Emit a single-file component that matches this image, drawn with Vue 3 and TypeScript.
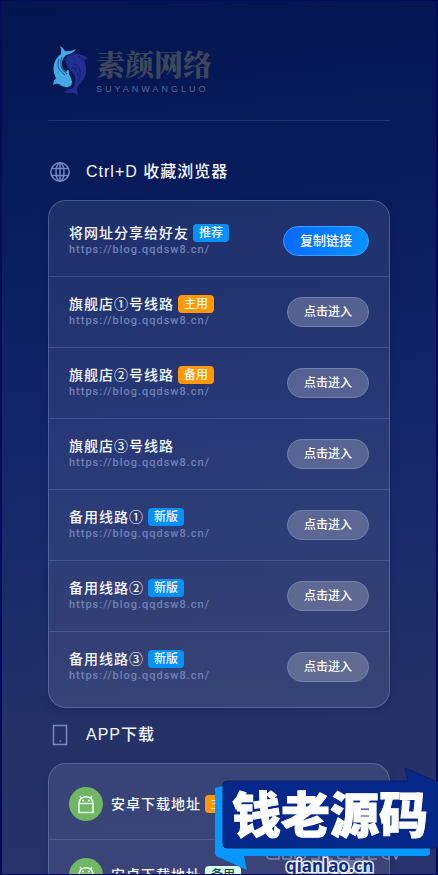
<script setup lang="ts">
interface Badge {
  text: string
  tone: 'blue' | 'orange' | 'mint'
}

interface Line {
  name: string
  badge?: Badge
  primary?: boolean
}

const url = 'https://blog.qqdsw8.cn/'

const lines: Line[] = [
  { name: '将网址分享给好友', badge: { text: '推荐', tone: 'blue' }, primary: true },
  { name: '旗舰店①号线路', badge: { text: '主用', tone: 'orange' } },
  { name: '旗舰店②号线路', badge: { text: '备用', tone: 'orange' } },
  { name: '旗舰店③号线路' },
  { name: '备用线路①', badge: { text: '新版', tone: 'blue' } },
  { name: '备用线路②', badge: { text: '新版', tone: 'blue' } },
  { name: '备用线路③', badge: { text: '新版', tone: 'blue' } },
]

const downloads: { name: string; badge: Badge }[] = [
  { name: '安卓下载地址', badge: { text: '主用', tone: 'orange' } },
  { name: '安卓下载地址', badge: { text: '备用', tone: 'mint' } },
]

function copyLink(): void {
  navigator.clipboard?.writeText(url)
}
</script>

<template>
  <div class="page">
    <header class="header">
      <svg class="logo" viewBox="0 0 40 52" aria-hidden="true">
        <path fill="#202f91" d="M14 16C16 9 25 7 30 10Q34 10 37 14L33 15C37 24 35 33 29 39Q25 42 26 45L27 51Q24 47 20 48Q16 49 13 47Q17 44 22 43C26 37 25 30 20 26Q16 22 14 16Z" />
        <path fill="none" stroke="#0b1d66" stroke-width="0.8" d="M23 19C30 21 31 30 27 37M28 11Q30 15 33 15M21 22Q27 25 27 31" />
        <path fill="#45a9e3" d="M9 1Q13 3 14 6Q19 7 25 4Q22 9 15 10C10 15 9 22 15 27Q18 22 18 28Q18 30 20 33Q23 41 17 42Q12 43 8 39Q5 38 2 40Q2 36 5 33C0 24 3 14 10 9Q11 5 9 1Z" />
        <path fill="none" stroke="#0b2d70" stroke-width="0.8" d="M8 14C5 22 9 26 14 30M11 12C8 20 11 25 16 29" />
      </svg>
      <div class="brand">
        <h1 class="brand-name">素颜网络</h1>
        <span class="brand-sub">SUYANWANGLUO</span>
      </div>
    </header>

    <main>
      <section>
        <h2 class="section-title">
          <svg class="section-icon" viewBox="0 0 24 24" aria-hidden="true">
            <circle cx="12" cy="12" r="9.2" />
            <ellipse cx="12" cy="12" rx="4" ry="9.2" />
            <path d="M4 8.500H20M4 15.500H20M12 3V21" />
          </svg>
          <span>Ctrl+D 收藏浏览器</span>
        </h2>
        <ul class="card">
          <li v-for="line in lines" :key="line.name" class="row">
            <div class="info">
              <div class="name-line">
                <span class="name">{{ line.name }}</span>
                <span v-if="line.badge" class="badge" :class="line.badge.tone">{{ line.badge.text }}</span>
              </div>
              <span class="url">{{ url }}</span>
            </div>
            <button v-if="line.primary" type="button" class="pill primary" @click="copyLink">复制链接</button>
            <a v-else class="pill" :href="url">点击进入</a>
          </li>
        </ul>
      </section>

      <section>
        <h2 class="section-title">
          <svg class="section-icon" viewBox="0 0 24 24" aria-hidden="true">
            <rect x="5.5" y="2.500" width="13" height="19" />
            <path d="M11.500 18H13" />
          </svg>
          <span>APP下载</span>
        </h2>
        <ul class="card">
          <li v-for="item in downloads" :key="item.badge.text" class="row">
            <div class="app">
              <svg class="android" viewBox="0 0 34 34" aria-hidden="true">
                <circle cx="17" cy="17" r="17" fill="#72b565" />
                <g fill="none" stroke="#e7ffe5" stroke-width="1.600">
                  <path d="M10 16.500V25.500H24V16.500ZM10 16.500C10 7.500 24 7.500 24 16.500M12.500 11L11 9M21.500 11L23 9" />
                </g>
                <circle cx="14" cy="13.500" r="1" fill="#e7ffe5" />
                <circle cx="20" cy="13.500" r="1" fill="#e7ffe5" />
              </svg>
              <div class="name-line">
                <span class="name">{{ item.name }}</span>
                <span class="badge" :class="item.badge.tone">{{ item.badge.text }}</span>
              </div>
            </div>
            <a class="pill" :href="url">下载</a>
          </li>
        </ul>
      </section>
    </main>

    <aside class="stamp">
      <svg class="stamp-shape" viewBox="0 0 223 107" aria-hidden="true">
        <path fill="none" stroke="#7d88ad" stroke-width="1.500" d="M53 86Q50 92 56 92H64V86M68 86V92H76V86M80 92V86M84 92Q92 94 90 86M96 92H104V86M108 86V92H118M124 86Q120 92 128 92H134V86M140 92H148V86M154 86V92H162M168 86Q166 92 174 92V86M178 86L181 92L184 86" />
        <path fill="#0698ff" d="M0 21L8 19H215V86Q215 89 211 89H29L32 103L3 90Q0 89 0 86Z" />
        <path fill="#06288b" stroke="#0a205f" stroke-width="1" d="M12 14H193L190 1L223 15V81H12Q8 81 8 77V18Q8 14 12 14Z" />
      </svg>
      <strong class="stamp-name">钱老源码</strong>
      <span class="stamp-url">qianlao.cn</span>
    </aside>
  </div>
</template>

<style>
body {
  margin: 0;
  background: #26316b;
}
</style>

<style scoped>
.page {
  position: relative;
  box-sizing: border-box;
  height: 100vh;
  overflow: hidden;
  padding: 0 48px;
  border: 1px solid #02085a;
  border-width: 1px 0;
  box-shadow: inset 2px 0 #020b58, inset -2px 0 #020b58;
  background: linear-gradient(175deg, #03154f 0%, #071b5b 20%, #14266a 50%, #243267 82%, #29326c 100%);
  color: #f3f8ff;
  font-family: "Liberation Sans", "Noto Sans CJK SC", sans-serif;
}

.header {
  display: flex;
  align-items: center;
  gap: 5px;
  box-sizing: border-box;
  height: 120px;
  padding: 20px 0 0 3px;
  border-bottom: 1px solid #21356f;
}

.logo {
  width: 40px;
  height: 52px;
}

.brand {
  display: flex;
  flex-direction: column;
  gap: 2px;
}

.brand-name {
  margin: 0;
  color: #3d475b;
  font: 900 29px/34px "Noto Serif CJK SC", "Noto Sans CJK SC", serif;
}

.brand-sub {
  color: #5566a0;
  font-size: 9px;
  line-height: 12px;
  letter-spacing: 3px;
}

main {
  padding-top: 24px;
}

.section-title {
  display: flex;
  align-items: center;
  gap: 14px;
  height: 54px;
  margin: 0;
  padding-bottom: 1px;
  font-size: 16px;
  font-weight: 500;
  line-height: 20px;
  letter-spacing: 1px;
}

.section-icon {
  width: 24px;
  height: 24px;
  fill: none;
  stroke: #7587c6;
  stroke-width: 1.5;
}

.card {
  margin: 0;
  padding: 5px 0;
  border: 1px solid rgba(140, 165, 225, 0.36);
  border-radius: 18px;
  background: rgba(255, 255, 255, 0.09);
  box-shadow: 0 2px 8px rgba(0, 5, 50, 0.2);
  list-style: none;
}

.row {
  display: flex;
  align-items: center;
  justify-content: space-between;
  height: 70px;
  padding: 0 20px;
}

.row + .row {
  border-top: 1px solid rgba(140, 165, 225, 0.25);
}

.info {
  display: flex;
  flex-direction: column;
}

.name-line {
  display: flex;
  align-items: center;
  gap: 4px;
  height: 18px;
}

.name {
  padding-bottom: 2px;
  font-size: 14px;
  font-weight: 500;
  letter-spacing: 1px;
  white-space: nowrap;
}

.badge {
  padding: 0 6px;
  border-radius: 4px;
  font-size: 12px;
  font-weight: 500;
  line-height: 18px;
  white-space: nowrap;
}

.blue {
  background: #0791f7;
}

.orange {
  background: #ff9807;
}

.mint {
  background: #d4fff1;
  color: #164b3f;
}

.url {
  color: #7181b7;
  font-family: Roboto, sans-serif;
  font-size: 11px;
  font-weight: 500;
  line-height: 16px;
  letter-spacing: 1px;
}

.pill {
  box-sizing: border-box;
  height: 30px;
  padding: 0 16px;
  border: 1px solid #7180ac;
  border-radius: 15px;
  background: rgba(255, 255, 255, 0.22);
  color: #ffffff;
  font-family: inherit;
  font-size: 12px;
  font-weight: 500;
  line-height: 28px;
  text-decoration: none;
  white-space: nowrap;
}

.primary {
  border-color: #3d9cff;
  background: linear-gradient(110deg, #0868fc, #0894ff);
  font-size: 13px;
}

.app {
  display: flex;
  align-items: center;
  gap: 8px;
}

.android {
  width: 34px;
  height: 34px;
}

/* Corner stamp laid over the page */
.stamp {
  position: absolute;
  right: 0;
  bottom: 0;
  width: 223px;
  height: 107px;
}

.stamp-shape {
  position: absolute;
  inset: 0;
  width: 100%;
  height: 100%;
}

.stamp-name {
  position: absolute;
  top: 15px;
  left: 17px;
  color: #ffffff;
  font: 900 49px/60px "Noto Sans CJK SC", sans-serif;
  -webkit-text-stroke: 1px #ffffff;
}

.stamp-url {
  position: absolute;
  bottom: -3px;
  left: 71px;
  color: #102e7b;
  font: 700 17px/22px "Noto Sans", sans-serif;
  -webkit-text-stroke: 3px #e8eeff;
  paint-order: stroke fill;
}
</style>
